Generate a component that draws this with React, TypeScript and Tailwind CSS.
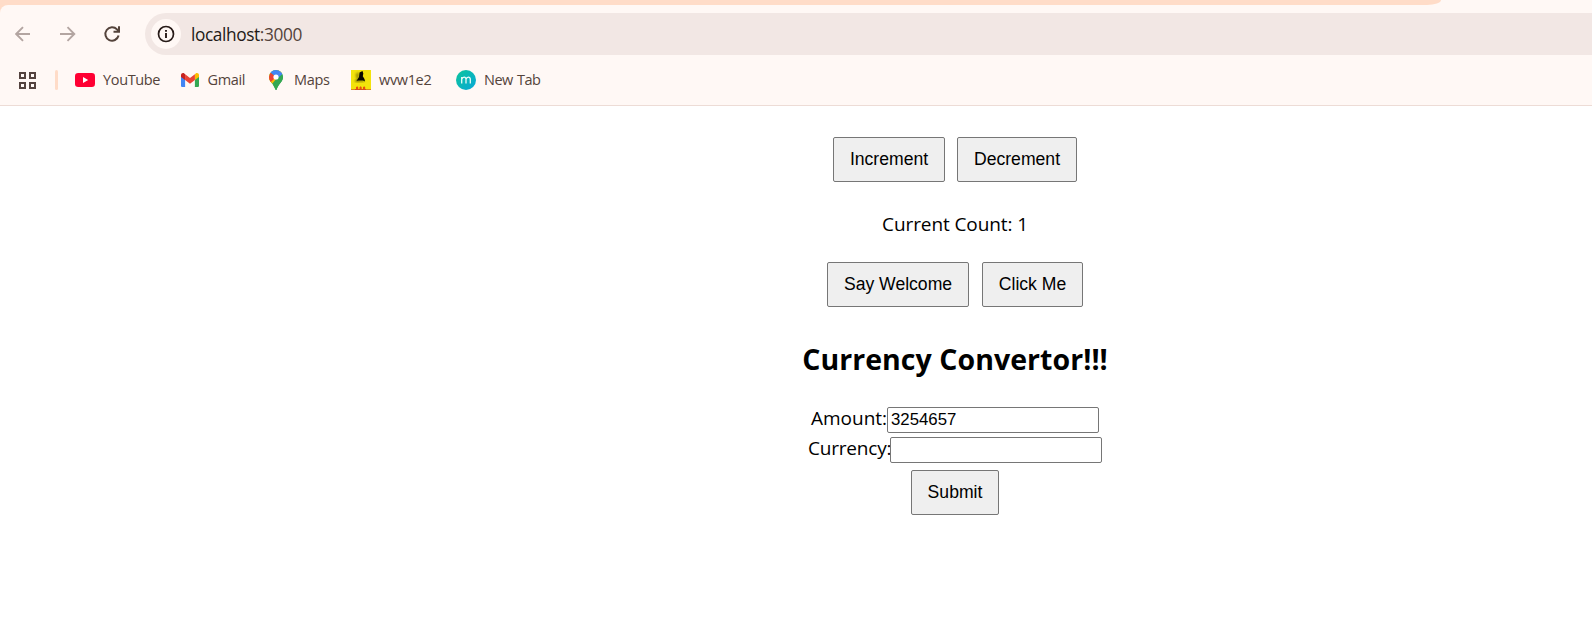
import React, { useState } from "react";
import type { ReactNode } from "react";

const uiFont = "font-['Open_Sans','Noto_Sans',sans-serif]";

function YouTubeIcon() {
  return (
    <svg width="20" height="14" viewBox="0 0 20 14">
      <rect width="20" height="14" rx="3.2" fill="#ff0033" />
      <path d="M8 4l5.2 3L8 10z" fill="#fff" />
    </svg>
  );
}

function GmailIcon() {
  return (
    <svg width="18" height="14" viewBox="0 0 18 14">
      <path d="M0 2.2V12.7C0 13.4.6 14 1.3 14H4.1V5.4z" fill="#4285f4" />
      <path d="M18 2.2V12.7c0 .7-.6 1.3-1.3 1.3H13.9V5.4z" fill="#34a853" />
      <path d="M13.9 1.3V7L18 3.9V2C18 .3 16-.6 14.7.5z" fill="#fbbc04" />
      <path d="M4.1 7V1.2L9 4.9l4.9-3.7V7L9 10.7z" fill="#ea4335" />
      <path d="M0 2v1.9L4.1 7V1.2L3.3.5C2-.6 0 .3 0 2z" fill="#c5221f" />
    </svg>
  );
}

function MapsIcon() {
  return (
    <svg width="14" height="20" viewBox="0 0 14 20">
      <defs>
        <clipPath id="pin">
          <path d="M7 0a7 7 0 0 1 7 7c0 3-1.600 4.700-3.200 6.700C9.200 15.700 8.200 17.500 7.800 19.300 7.600 20.200 6.400 20.200 6.200 19.300 5.800 17.500 4.800 15.700 3.200 13.700 1.600 11.700 0 10 0 7a7 7 0 0 1 7-7z" />
        </clipPath>
      </defs>
      <g clipPath="url(#pin)">
        <rect width="14" height="20" fill="#34a853" />
        <path d="M7 7L1 14-2 9V6l3-3z" fill="#fbbc04" />
        <path d="M3.200 13.700L14 1 9 0 0 9z" fill="#fbbc04" />
        <path d="M1.600 2.500L7 7l-5.500 5.200L-1 8z" fill="#ea4335" />
        <path d="M1.600 2.500L7 7l5.500-5.500L9-1H3z" fill="#4285f4" />
        <path d="M12 1.500L7 7l-.5 3L14 3.500z" fill="#4285f4" />
        <path d="M14 4L3.200 16.500 8 21l7-9z" fill="#34a853" />
      </g>
      <circle cx="7" cy="7" r="2.600" fill="#fff" />
    </svg>
  );
}

function WitchIcon() {
  return (
    <svg width="20" height="20" viewBox="0 0 20 20">
      <defs>
        <filter id="smoke" x="-30%" y="-30%" width="160%" height="160%">
          <feGaussianBlur stdDeviation="1" />
        </filter>
      </defs>
      <rect width="20" height="20" fill="#f3e30b" />
      <path d="M4.500 4L8 2v9H6z" fill="#7a6d00" opacity=".7" filter="url(#smoke)" />
      <path d="M4 10h9v2H4z" fill="#6b6000" opacity=".7" filter="url(#smoke)" />
      <path d="M8.500 2.500L11.500 1l.8 2.500-.5 2.700 1.700 2.800.5 2.500-2-.9H7L5.500 11 8 7z" fill="#0a0a00" />
      <path d="M5 19v-1.800l1.200-1 1 1V19zM8.500 19v-1.800l1.200-1 1 1V19zM12 19v-1.800l1.200-1 1 1V19z" fill="#e8500e" />
      <rect y="19" width="20" height="1" fill="#d98a1c" />
      <rect x="4" y="19" width="11" height="1" fill="#d5501a" />
    </svg>
  );
}

function NewTabIcon() {
  return (
    <svg width="20" height="20" viewBox="0 0 20 20">
      <defs>
        <linearGradient id="teal" x1="0" y1="0" x2="1" y2="1">
          <stop offset="0" stopColor="#0cc59b" />
          <stop offset="1" stopColor="#08a7d8" />
        </linearGradient>
      </defs>
      <circle cx="10" cy="10" r="10" fill="url(#teal)" />
      <path d="M5.700 13.500V7M5.700 9.300C6.500 6.700 10 6.400 10 9.200v4.300M10 9.300c.8-2.600 4.300-2.900 4.300-.1v4.300" fill="none" stroke="#e9fbf8" strokeWidth="1.300" />
    </svg>
  );
}

function Bookmark({ icon, label, className }: { icon: ReactNode; label: string; className: string }) {
  return (
    <div className={`flex h-5 shrink-0 items-center text-[14.5px] leading-5 whitespace-nowrap text-[#54433b] ${className}`}>
      {icon}
      <span>{label}</span>
    </div>
  );
}

function BrowserChrome() {
  return (
    <header className={`h-[106px] bg-[#ffdcc8] ${uiFont}`}>
      <div className="flex h-[5px] justify-end bg-[#fff8f5]">
        <div className="h-[5px] w-full rounded-br-[14px_5px] bg-[#ffdcc8]" />
        <div className="w-[151px] shrink-0" />
      </div>
      <div className="h-[101px] rounded-tl-[8px] border-b border-[#eddcd6] bg-[#fff8f5] pt-2">
        <div className="flex h-[42px] items-center">
          <svg className="ml-[15px] shrink-0" width="16" height="16" viewBox="0 0 16 16" fill="none" stroke="#b3a5a1" strokeWidth="1.900">
            <path d="M15 8H1.500M8 1.200L1.200 8 8 14.800" />
          </svg>
          <svg className="ml-[29px] shrink-0" width="16" height="16" viewBox="0 0 16 16" fill="none" stroke="#b3a5a1" strokeWidth="1.900">
            <path d="M0 8h14M7.500 1.200L14.300 8l-6.800 6.800" />
          </svg>
          <svg className="ml-[27px] shrink-0" width="18" height="18" viewBox="0 0 18 18" fill="none" stroke="#54433b" strokeWidth="2">
            <path d="M15.600 10.600A6.700 6.700 0 1 1 14 4.400L15.500 6.200" />
            <path d="M16 1.200v5.500H10.500" />
          </svg>
          <div className="ml-[24px] flex h-[42px] flex-1 items-center rounded-l-full bg-[#f2e7e4] pl-[6px]">
            <div className="flex size-[30px] items-center justify-center rounded-full bg-[#fff8f5]">
              <svg width="18" height="18" viewBox="0 0 18 18" fill="none" stroke="#271b18" strokeWidth="1.700">
                <circle cx="9" cy="9" r="7.500" />
                <path d="M9 8v5M9 5v1.700" strokeWidth="1.900" />
              </svg>
            </div>
            <span className="ml-[10px] pt-[2px] text-[17.300px] leading-6 tracking-[-0.4px] text-[#221a16]">
              localhost<span className="text-[#54433b]">:3000</span>
            </span>
          </div>
        </div>
        <nav className="mt-[15px] flex h-5 items-center">
          <svg className="ml-[18px] shrink-0" width="19" height="19" viewBox="0 0 19 19" fill="none" stroke="#54433f" strokeWidth="2">
            <path d="M2 2h5v5H2zM12 2h5v5h-5zM2 12h5v5H2zM12 12h5v5h-5z" />
          </svg>
          <div className="ml-[18px] h-5 w-[3px] shrink-0 rounded-full bg-[#ffdcc8]" />
          <Bookmark icon={<YouTubeIcon />} label="YouTube" className="ml-[17px] w-[106px] gap-2 tracking-[-0.35px]" />
          <Bookmark icon={<GmailIcon />} label="Gmail" className="w-[88px] gap-[8.5px] tracking-[-0.35px]" />
          <Bookmark icon={<MapsIcon />} label="Maps" className="w-[82px] gap-[11px] tracking-[-0.35px]" />
          <Bookmark icon={<WitchIcon />} label="wvw1e2" className="w-[105px] gap-2 tracking-[-0.35px]" />
          <Bookmark icon={<NewTabIcon />} label="New Tab" className="gap-2 tracking-[-0.5px] [word-spacing:1px]" />
        </nav>
      </div>
    </header>
  );
}

function Button({ children, className, onClick }: { children: ReactNode; className: string; onClick?: () => void }) {
  return (
    <button
      type="button"
      onClick={onClick}
      className={`h-[45px] shrink-0 rounded-[2px] border border-[#767676] bg-[#efefef] pb-[2px] font-['Liberation_Sans',Arial,sans-serif] text-[17.600px] leading-5 whitespace-nowrap text-black ${className}`}
    >
      {children}
    </button>
  );
}

const inputClass =
  "h-[26px] w-[212px] rounded-[2px] border border-[#767676] bg-white px-[3px] font-['Liberation_Sans',Arial,sans-serif] text-[16.800px] text-black outline-none";

export default function App() {
  const [count, setCount] = useState(1);
  const [amount, setAmount] = useState("3254657");
  const [currency, setCurrency] = useState("");

  return (
    <div className="h-[623px] overflow-hidden bg-white text-black">
      <BrowserChrome />
      <main className={`flex flex-col items-center pt-[31px] pl-[318px] ${uiFont}`}>
        <div className="flex gap-3">
          <Button className="w-[112px]" onClick={() => setCount(count + 1)}>Increment</Button>
          <Button className="w-[120px]" onClick={() => setCount(count - 1)}>Decrement</Button>
        </div>
        <p className="mt-[28px] h-7 text-[19px] leading-7 tracking-[-0.1px] whitespace-nowrap">Current Count: {count}</p>
        <div className="mt-[24px] flex gap-[13px]">
          <Button className="w-[142px]">Say Welcome</Button>
          <Button className="w-[101px]">Click Me</Button>
        </div>
        <h2 className="mt-[32px] h-10 text-[28.500px] leading-10 font-bold tracking-[0.05px] whitespace-nowrap">Currency Convertor!!!</h2>
        <form className="mt-[28px] flex flex-col items-center" onSubmit={(e) => e.preventDefault()}>
          <label className="flex h-[26px] items-center text-[19px] leading-6 whitespace-nowrap">
            <span className="w-[76px] pb-1">Amount:</span>
            <input className={inputClass} value={amount} onChange={(e) => setAmount(e.target.value)} />
          </label>
          <label className="mt-1 flex h-[26px] items-center text-[19px] leading-6 whitespace-nowrap">
            <span className="w-[82px] pb-1 tracking-[-0.2px]">Currency:</span>
            <input className={inputClass} value={currency} onChange={(e) => setCurrency(e.target.value)} />
          </label>
          <Button className="mt-[7px] w-[88px]">Submit</Button>
        </form>
      </main>
    </div>
  );
}
